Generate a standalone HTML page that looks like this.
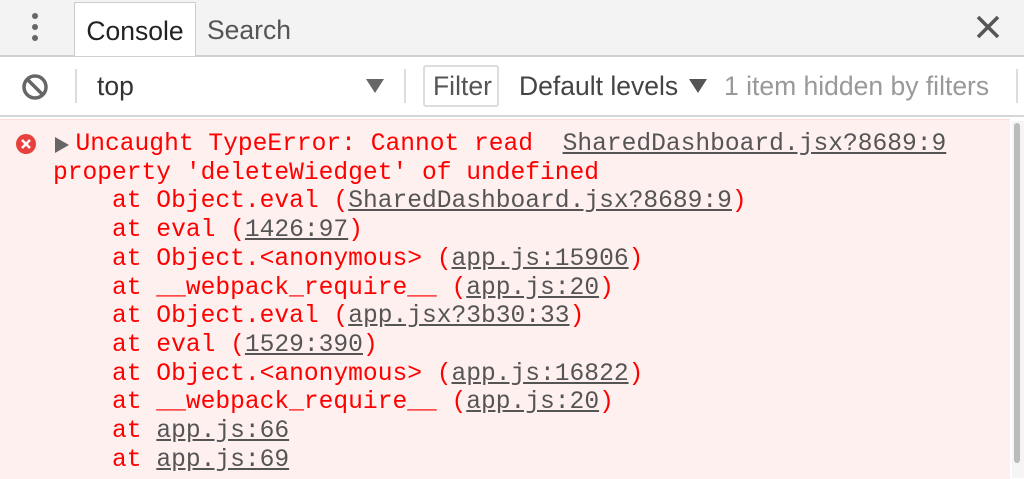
<!DOCTYPE html>
<html><head><style>
body{margin:0;width:1024px;height:478px;overflow:hidden;background:#fff;font-family:"Liberation Sans",sans-serif;position:relative}
.tabs{position:absolute;left:0;top:0;width:1024px;height:55px;background:#f3f3f3;border-bottom:2px solid #d0d0d0}
.dots{position:absolute;left:32px;top:13px}
.dots i{display:block;width:6px;height:6px;border-radius:3px;background:#666;margin-bottom:5px}
.tab{position:absolute;top:2px;height:53px;font-size:26.5px;color:#222;line-height:56px}
.t1{left:74px;width:120px;background:#fff;border:1px solid #ccc;border-bottom:none;text-align:center}
.t2{left:207px;color:#555}
.x{position:absolute;left:975px;top:14px}
.tb{position:absolute;left:0;top:57px;width:1024px;height:58px;background:#fff;border-bottom:2px solid #d6d6d6}
.tb span{position:absolute;font-size:26.5px;line-height:58px;top:0;white-space:nowrap}
.sep{position:absolute;top:12px;width:2px;height:34px;background:#ddd}
.con{position:absolute;left:0;top:119px;width:1010px;height:359px;background:#fff0f0;border-top:1px solid #fdd}
pre{margin:0;position:absolute;left:53px;top:11px;font-family:"Liberation Mono",monospace;font-size:24.6px;line-height:28.7px;color:#f00}
u{color:#555}
.sb{position:absolute;left:1012px;top:121px;width:12px;height:357px;background:#f5f5f5}
.sb div{position:absolute;left:2px;top:2px;width:6px;height:340px;background:#bbb;border-radius:3px}
</style></head><body>
<div class="tabs">
<div class="dots"><i></i><i></i><i></i></div>
<div class="tab t1">Console</div>
<div class="tab t2">Search</div>
<svg class="x" width="26" height="26" viewBox="0 0 26 26"><path d="M3 3L23 23M23 3L3 23" stroke="#555" stroke-width="3.5"/></svg>
</div>
<div class="tb">
<svg style="position:absolute;left:21px;top:16px" width="28" height="28" viewBox="0 0 28 28"><circle cx="14" cy="14" r="11" fill="none" stroke="#666" stroke-width="3.5"/><path d="M6 6L22 22" stroke="#666" stroke-width="3.5"/></svg>
<div class="sep" style="left:75px"></div>
<span style="left:97px;color:#333">top</span>
<svg style="position:absolute;left:366px;top:22px" width="18" height="14"><path d="M0 0H18L9 14Z" fill="#666"/></svg>
<div class="sep" style="left:404px"></div>
<div style="position:absolute;left:423px;top:8px;width:76px;height:42px;border:2px solid #ddd;border-radius:3px;box-sizing:border-box;overflow:hidden"><span style="left:8px;top:0;line-height:38px;color:#555">Filter</span></div>
<span style="left:519px;color:#444">Default levels</span>
<svg style="position:absolute;left:689px;top:22px" width="18" height="14"><path d="M0 0H18L9 14Z" fill="#555"/></svg>
<span style="left:724px;color:#999">1 item hidden by filters</span>
<div class="sep" style="left:1016px"></div>
</div>
<div class="con">
<svg style="position:absolute;left:15px;top:13px" width="22" height="22" viewBox="0 0 22 22"><circle cx="11" cy="11" r="10" fill="#e8403c"/><path d="M7 7L15 15M15 7L7 15" stroke="#fff" stroke-width="2.5"/></svg>
<svg style="position:absolute;left:55px;top:17px" width="14" height="16"><path d="M0 0L14 8L0 16Z" fill="#666"/></svg>
<pre><span style="position:relative;left:-7px">  Uncaught TypeError: Cannot read  <u>SharedDashboard.jsx?8689:9</u></span>
property 'deleteWiedget' of undefined
    at Object.eval (<u>SharedDashboard.jsx?8689:9</u>)
    at eval (<u>1426:97</u>)
    at Object.&lt;anonymous&gt; (<u>app.js:15906</u>)
    at __webpack_require__ (<u>app.js:20</u>)
    at Object.eval (<u>app.jsx?3b30:33</u>)
    at eval (<u>1529:390</u>)
    at Object.&lt;anonymous&gt; (<u>app.js:16822</u>)
    at __webpack_require__ (<u>app.js:20</u>)
    at <u>app.js:66</u>
    at <u>app.js:69</u></pre>
</div>
<div class="sb"><div></div></div>
</body></html>
